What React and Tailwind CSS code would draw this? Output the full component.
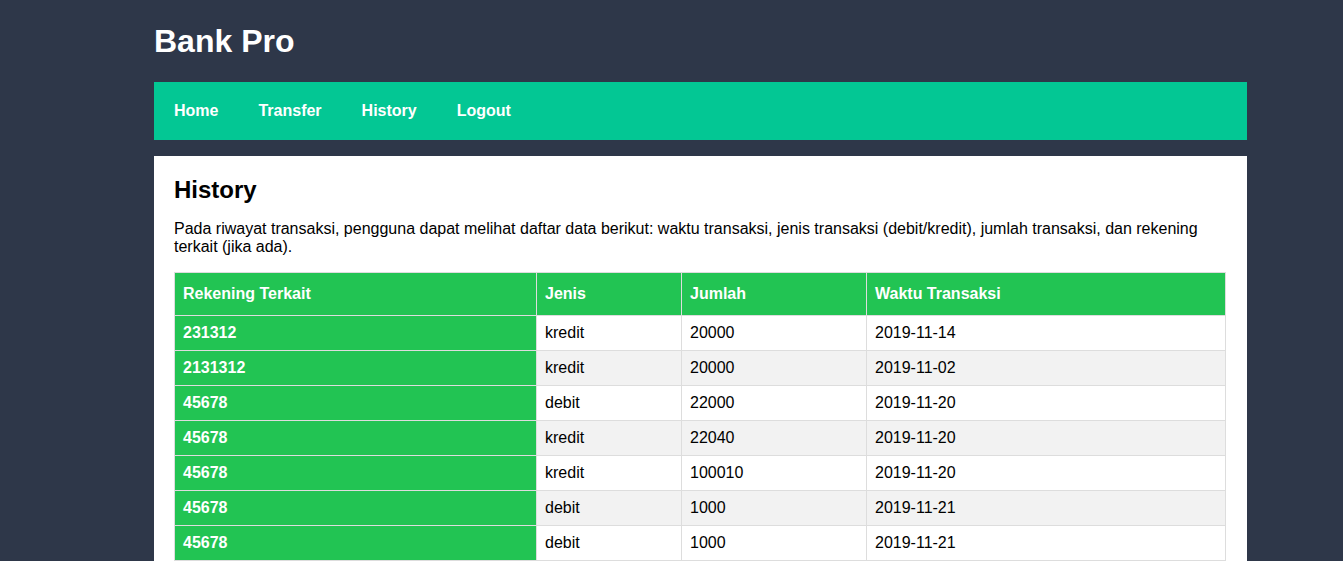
const rows = [
  { rek: '231312', jenis: 'kredit', jumlah: '20000', waktu: '2019-11-14' },
  { rek: '2131312', jenis: 'kredit', jumlah: '20000', waktu: '2019-11-02' },
  { rek: '45678', jenis: 'debit', jumlah: '22000', waktu: '2019-11-20' },
  { rek: '45678', jenis: 'kredit', jumlah: '22040', waktu: '2019-11-20' },
  { rek: '45678', jenis: 'kredit', jumlah: '100010', waktu: '2019-11-20' },
  { rek: '45678', jenis: 'debit', jumlah: '1000', waktu: '2019-11-21' },
  { rek: '45678', jenis: 'debit', jumlah: '1000', waktu: '2019-11-21' },
];

const links = ['Home', 'Transfer', 'History', 'Logout'];

export default function App() {
  return (
    <div className="min-h-screen bg-[#2e3749] font-['Liberation_Sans',Arial,sans-serif] text-black">
      <div className="ml-[154px] w-[1093px] pb-10">
        <h1 className="pt-[23px] mb-[22px] text-[32px] leading-[37px] font-bold text-white">Bank Pro</h1>

        <nav className="flex h-[58px] items-center bg-[#03c794]">
          {links.map(l => (
            <a key={l} href="#" className="px-5 text-base font-bold leading-[18px] text-white">{l}</a>
          ))}
        </nav>

        <main className="mt-4 bg-white p-5">
          <h2 className="text-2xl leading-[28px] font-bold">History</h2>
          <p className="mt-4 text-base leading-[18px]">
            Pada riwayat transaksi, pengguna dapat melihat daftar data berikut: waktu transaksi, jenis transaksi (debit/kredit), jumlah transaksi, dan rekening terkait (jika ada).
          </p>

          <table className="mt-4 w-[1052px] border-collapse text-base leading-[18px]">
            <thead>
              <tr className="bg-[#22c453] text-white text-left">
                <th className="w-[362px] border border-[#ddd] px-2 py-3 font-bold">Rekening Terkait</th>
                <th className="w-[145px] border border-[#ddd] px-2 py-3 font-bold">Jenis</th>
                <th className="w-[185px] border border-[#ddd] px-2 py-3 font-bold">Jumlah</th>
                <th className="border border-[#ddd] px-2 py-3 font-bold">Waktu Transaksi</th>
              </tr>
            </thead>
            <tbody>
              {rows.map((r, i) => (
                <tr key={i} className={i % 2 === 1 ? 'bg-[#f2f2f2]' : 'bg-white'}>
                  <td className="border border-[#ddd] bg-[#22c453] px-2 py-2 font-bold text-white">{r.rek}</td>
                  <td className="border border-[#ddd] px-2 py-2">{r.jenis}</td>
                  <td className="border border-[#ddd] px-2 py-2">{r.jumlah}</td>
                  <td className="border border-[#ddd] px-2 py-2">{r.waktu}</td>
                </tr>
              ))}
            </tbody>
          </table>
        </main>
      </div>
    </div>
  );
}
